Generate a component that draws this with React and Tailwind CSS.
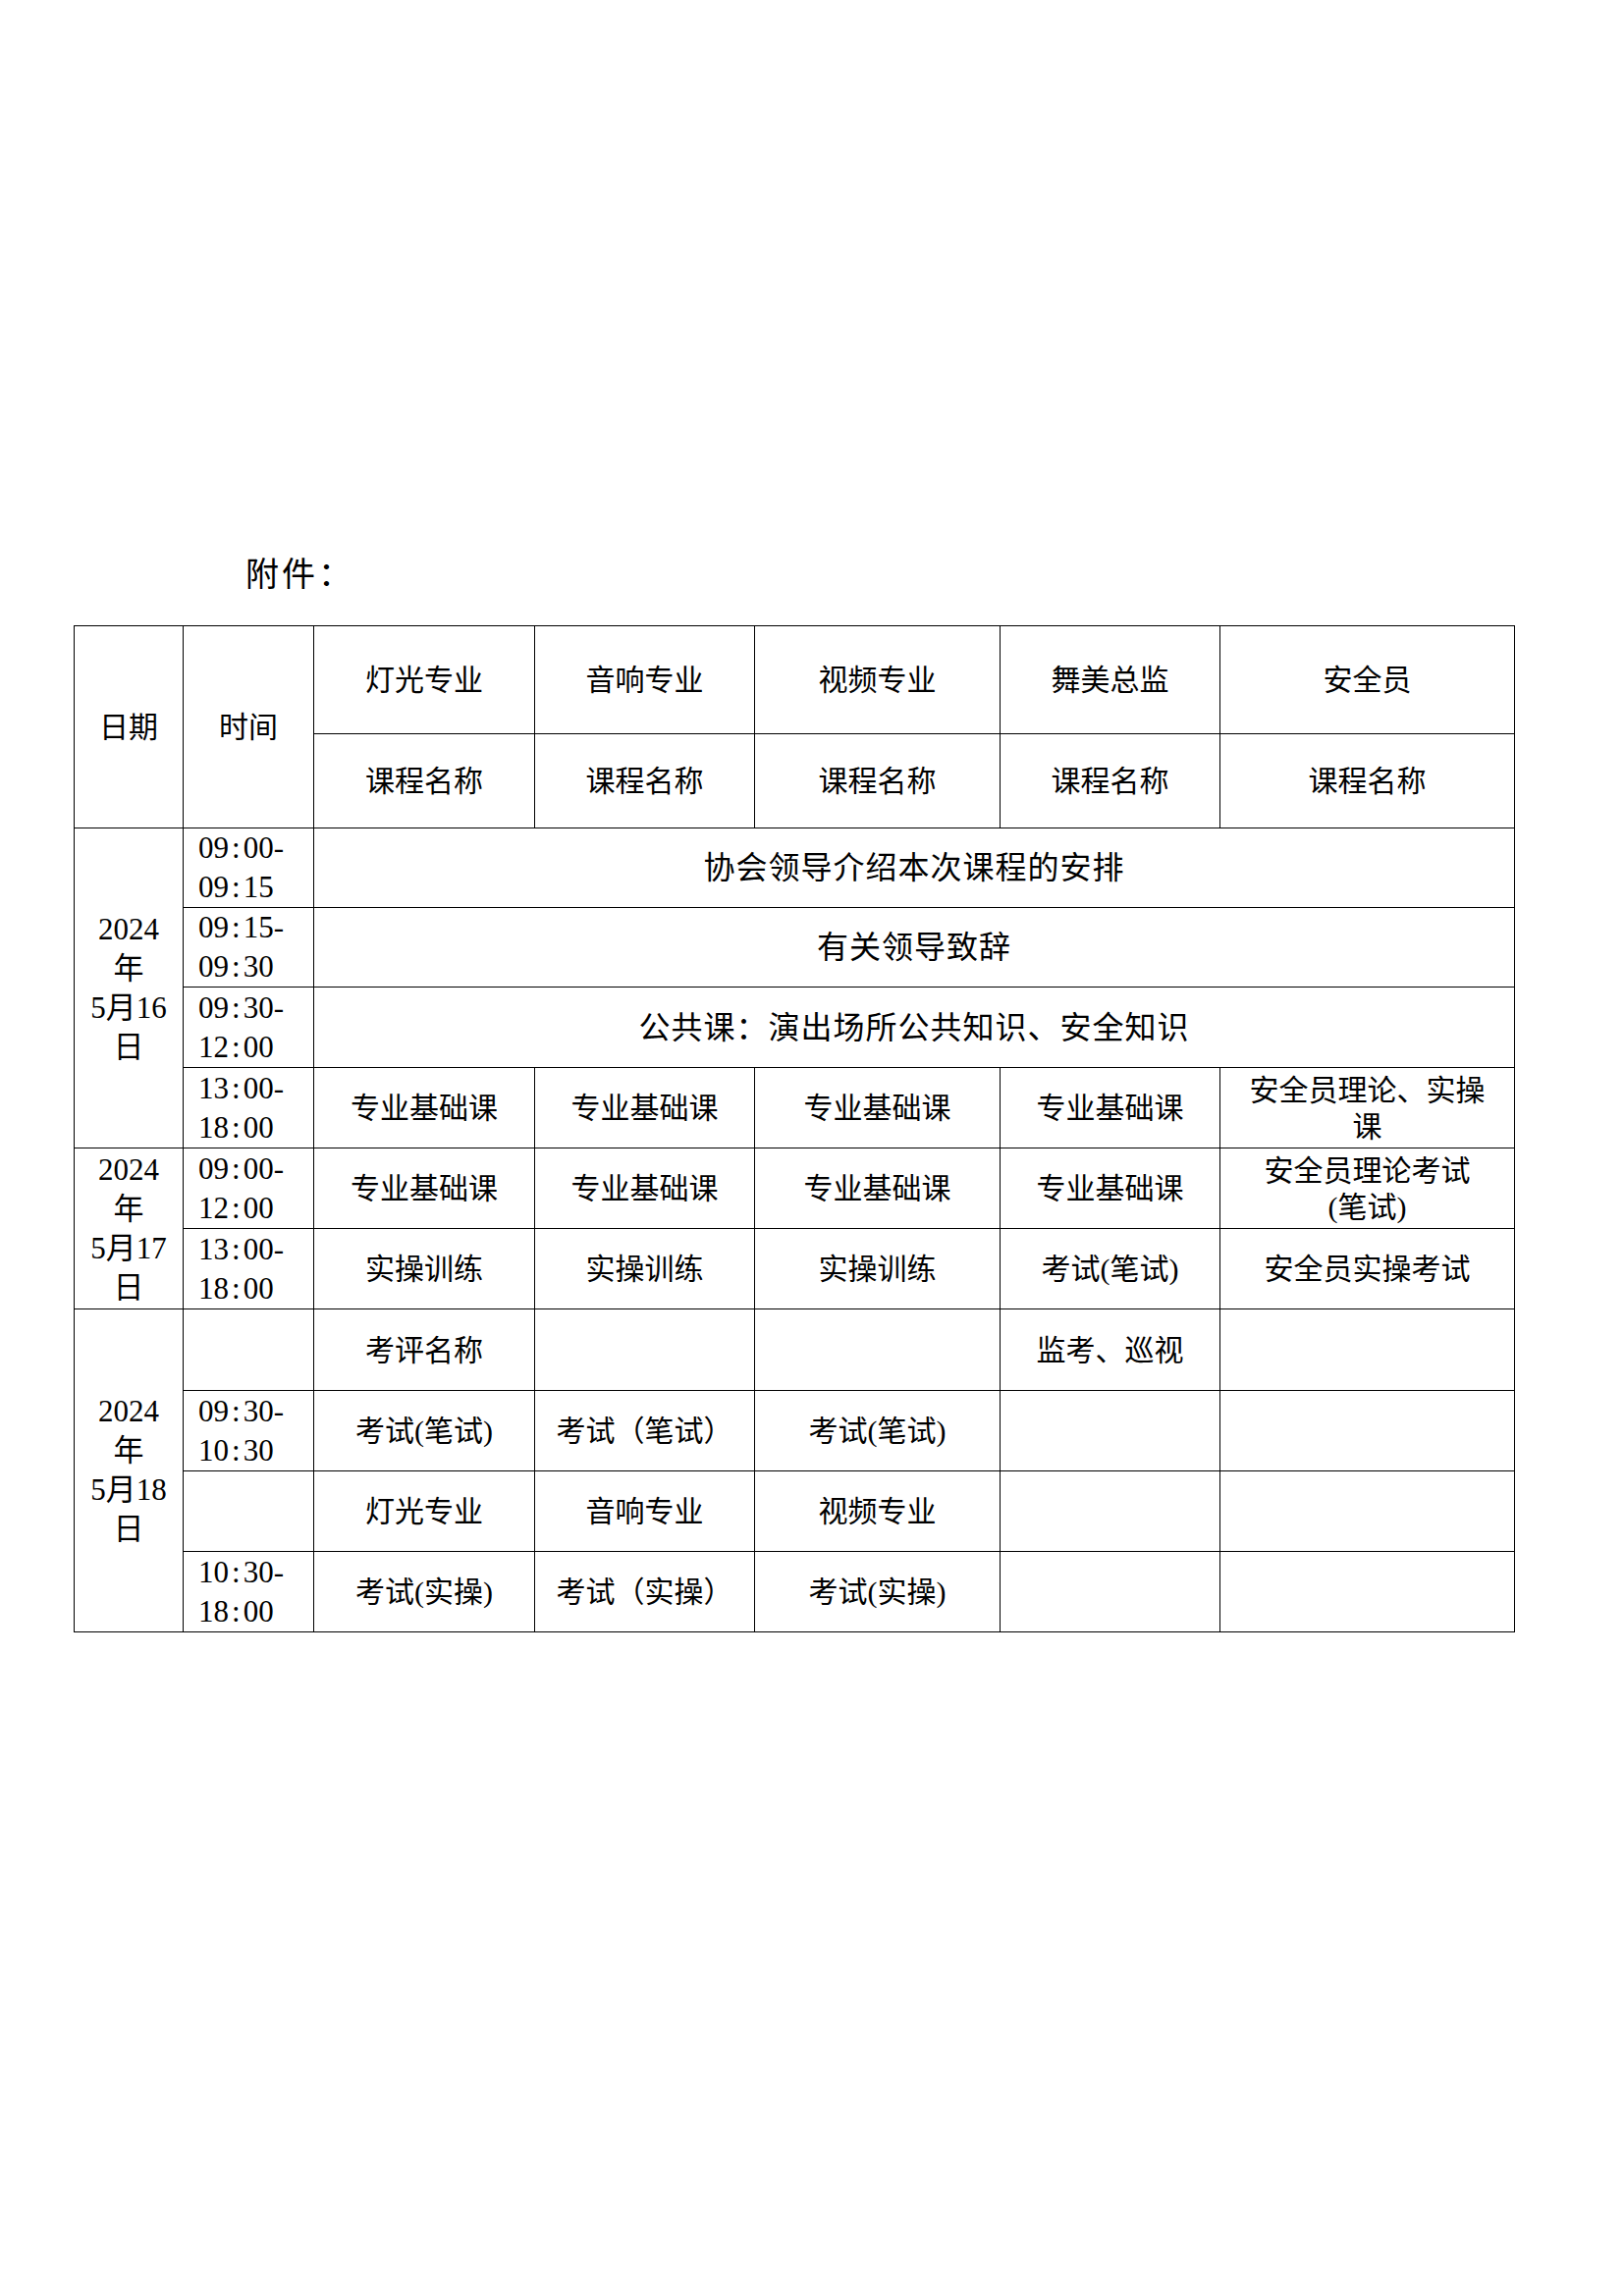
import React from "react";

const cell = "border border-black text-center align-middle p-0";
const timeCell = "border border-black text-left align-middle p-0 pl-[15px] text-[31px] leading-[40px]";
const wide = "border border-black text-center align-middle p-0 text-[32px] tracking-[1px]";

const Time = ({ from, to }) => {
  if (!from) return <td className={timeCell}></td>;
  const fmt = (t) => {
    const [h, m] = t.split(":");
    return (
      <>
        {h}
        <span className="mx-[3px]">:</span>
        {m}
      </>
    );
  };
  return (
    <td className={timeCell}>
      <div>{fmt(from)}-</div>
      <div>{fmt(to)}</div>
    </td>
  );
};

const DateCell = ({ rows, day }) => (
  <td rowSpan={rows} className="border border-black text-center align-middle p-0 text-[31px] leading-[40px]">
    <div>2024</div>
    <div>年</div>
    <div>5月{day}</div>
    <div>日</div>
  </td>
);

const Cells = ({ items }) =>
  items.map((t, i) => (
    <td key={i} className={cell + " leading-[37px]"}>
      {t}
    </td>
  ));

const App = () => {
  const majors = ["灯光专业", "音响专业", "视频专业", "舞美总监", "安全员"];
  const base = ["专业基础课", "专业基础课", "专业基础课", "专业基础课"];

  return (
    <div className="w-[1654px] h-[2339px] bg-white text-black font-['Liberation_Serif','Noto_Sans_CJK_SC',serif]">
      <div className="pt-[569px] pl-[250px] text-[34px] leading-[34px] tracking-[3px]">附件：</div>

      <table className="mt-[34px] ml-[75px] w-[1467px] table-fixed border-collapse text-[30px]">
        <colgroup>
          <col className="w-[111px]" />
          <col className="w-[133px]" />
          <col className="w-[225px]" />
          <col className="w-[224px]" />
          <col className="w-[250px]" />
          <col className="w-[224px]" />
          <col className="w-[300px]" />
        </colgroup>
        <tbody>
          <tr className="h-[110px]">
            <td rowSpan={2} className={cell}>日期</td>
            <td rowSpan={2} className={cell}>时间</td>
            {majors.map((m) => (
              <td key={m} className={cell}>{m}</td>
            ))}
          </tr>
          <tr className="h-[96px]">
            {majors.map((m) => (
              <td key={m} className={cell}>课程名称</td>
            ))}
          </tr>

          {/* 5月16日 */}
          <tr className="h-[81px]">
            <DateCell rows={4} day="16" />
            <Time from="09:00" to="09:15" />
            <td colSpan={5} className={wide}>协会领导介绍本次课程的安排</td>
          </tr>
          <tr className="h-[80px]">
            <Time from="09:15" to="09:30" />
            <td colSpan={5} className={wide}>有关领导致辞</td>
          </tr>
          <tr className="h-[82px]">
            <Time from="09:30" to="12:00" />
            <td colSpan={5} className={wide}>公共课：演出场所公共知识、安全知识</td>
          </tr>
          <tr className="h-[82px]">
            <Time from="13:00" to="18:00" />
            <Cells items={[...base, <>安全员理论、实操<br />课</>]} />
          </tr>

          {/* 5月17日 */}
          <tr className="h-[82px]">
            <DateCell rows={2} day="17" />
            <Time from="09:00" to="12:00" />
            <Cells items={[...base, <>安全员理论考试<br />(笔试)</>]} />
          </tr>
          <tr className="h-[82px]">
            <Time from="13:00" to="18:00" />
            <Cells items={["实操训练", "实操训练", "实操训练", "考试(笔试)", "安全员实操考试"]} />
          </tr>

          {/* 5月18日 */}
          <tr className="h-[83px]">
            <DateCell rows={4} day="18" />
            <Time />
            <Cells items={["考评名称", "", "", "监考、巡视", ""]} />
          </tr>
          <tr className="h-[82px]">
            <Time from="09:30" to="10:30" />
            <Cells items={["考试(笔试)", "考试（笔试）", "考试(笔试)", "", ""]} />
          </tr>
          <tr className="h-[82px]">
            <Time />
            <Cells items={["灯光专业", "音响专业", "视频专业", "", ""]} />
          </tr>
          <tr className="h-[82px]">
            <Time from="10:30" to="18:00" />
            <Cells items={["考试(实操)", "考试（实操）", "考试(实操)", "", ""]} />
          </tr>
        </tbody>
      </table>
    </div>
  );
};

export default App;
